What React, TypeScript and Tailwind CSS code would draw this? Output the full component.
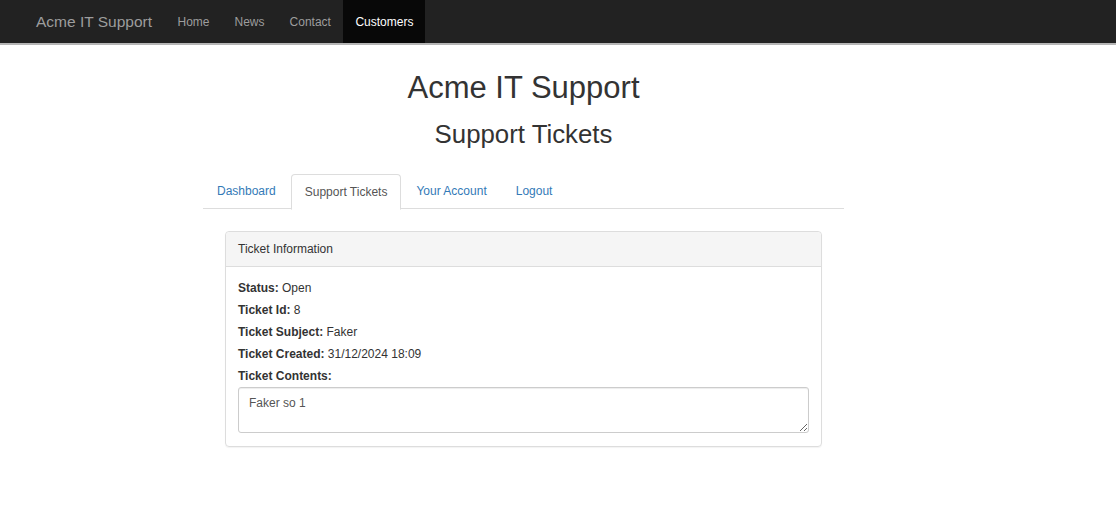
import React from 'react';

const navLinks = ['Home', 'News', 'Contact'];

const App = () => {
  return (
    <div className="min-h-screen bg-white text-[#333333] text-[12px] leading-[17px] font-['Liberation_Sans',Arial,sans-serif]">
      <nav className="h-[45px] bg-[#222222] border-b-2 border-[#b5b5b5] flex">
        <a className="ml-[23px] px-[13px] flex items-center text-[15.5px] text-[#9d9d9d]">Acme IT Support</a>
        <ul className="flex">
          {navLinks.map((l) => (
            <li key={l} className="px-[12.5px] flex items-center pt-[1px] text-[#9d9d9d]">{l}</li>
          ))}
          <li className="px-[12px] flex items-center pt-[1px] bg-[#080808] text-white">Customers</li>
        </ul>
      </nav>

      <div className="ml-[203px] w-[641px]">
        <h1 className="text-center text-[31px] leading-[34px] mt-[26px] mb-[15px]">Acme IT Support</h1>
        <h2 className="text-center text-[25.8px] leading-[28px] mb-[26px]">Support Tickets</h2>

        <ul className="flex border-b border-[#dddddd] h-[35px]">
          <li className="px-[14px] flex items-center pt-[1px] text-[#337ab7]">Dashboard</li>
          <li className="px-[13px] flex items-center pt-[1px] text-[#555555] bg-white border border-[#dddddd] border-b-white rounded-t-[4px] h-[36px] ml-[1px]">Support Tickets</li>
          <li className="px-[15px] flex items-center pt-[1px] text-[#337ab7]">Your Account</li>
          <li className="px-[14px] flex items-center pt-[1px] text-[#337ab7]">Logout</li>
        </ul>

        <div className="mx-[22px] mt-[22px] border border-[#dddddd] rounded-[4px] shadow-[0_1px_1px_rgba(0,0,0,0.05)]">
          <div className="bg-[#f5f5f5] border-b border-[#dddddd] h-[35px] px-[12px] flex items-center rounded-t-[4px]">Ticket Information</div>
          <div className="px-[12px] pt-[10px] pb-[13px]">
            <p className="leading-[22px]"><b>Status:</b> Open</p>
            <p className="leading-[22px]"><b>Ticket Id:</b> 8</p>
            <p className="leading-[22px]"><b>Ticket Subject:</b> Faker</p>
            <p className="leading-[22px]"><b>Ticket Created:</b> 31/12/2024 18:09</p>
            <p className="leading-[22px]"><b>Ticket Contents:</b></p>
            <textarea
              readOnly
              defaultValue="Faker so 1"
              className="block w-full h-[46px] border border-[#cccccc] rounded-[3px] px-[10px] pt-[7px] pb-[5px] text-[12px] text-[#555555] shadow-[inset_0_1px_1px_rgba(0,0,0,0.075)] outline-none"
            />
          </div>
        </div>
      </div>
    </div>
  );
};

export default App;
